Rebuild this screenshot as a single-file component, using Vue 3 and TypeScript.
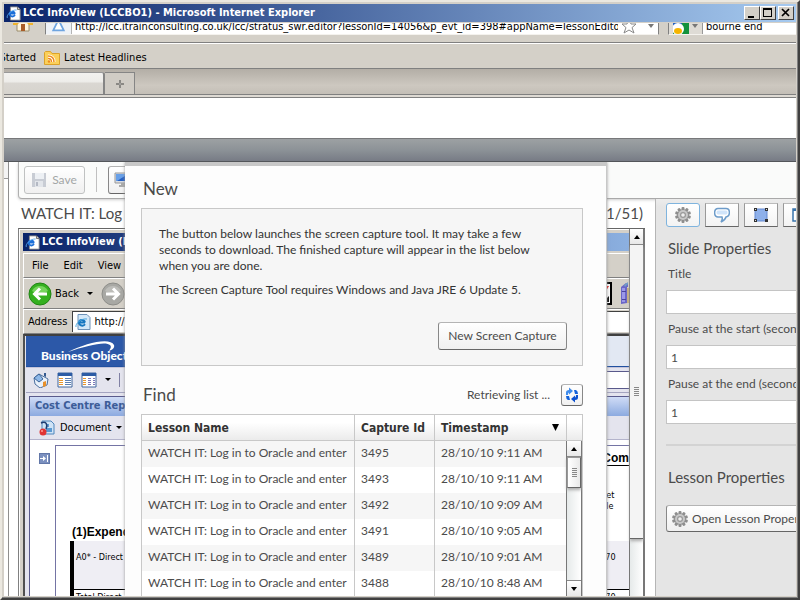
<script setup lang="ts">
import { ref } from 'vue'

interface Capture {
  name: string
  id: number
  time: string
}

const captures: Capture[] = [
  { name: 'WATCH IT: Log in to Oracle and enter', id: 3495, time: '28/10/10 9:11 AM' },
  { name: 'WATCH IT: Log in to Oracle and enter', id: 3493, time: '28/10/10 9:11 AM' },
  { name: 'WATCH IT: Log in to Oracle and enter', id: 3492, time: '28/10/10 9:09 AM' },
  { name: 'WATCH IT: Log in to Oracle and enter', id: 3491, time: '28/10/10 9:05 AM' },
  { name: 'WATCH IT: Log in to Oracle and enter', id: 3489, time: '28/10/10 9:01 AM' },
  { name: 'WATCH IT: Log in to Oracle and enter', id: 3488, time: '28/10/10 8:48 AM' },
]

const url = ref('http://lcc.itrainconsulting.co.uk/lcc/stratus_swr.editor?lessonId=14056&p_evt_id=398#appName=lessonEditor;c')
const search = ref('bourne end')
const slideTitle = ref('')
const pauseStart = ref('1')
const pauseEnd = ref('1')
const gearTeeth = [0, 36, 72, 108, 144, 180, 216, 252, 288, 324]
</script>

<template>
  <div class="window">
    <header class="titlebar">
      <svg class="ie" viewBox="0 0 17 17" aria-hidden="true">
        <path d="M5 1h8l3 3v12H5z" fill="#fff" stroke="#8a8a8a" />
        <path d="M13 1v3h3" fill="#d4d0c8" stroke="#666" />
        <path d="M10.500 8.500H4.200c.3-2.600 5.400-3.200 5.800.3M4.200 8.500c0 3.900 4.300 4.300 6 1.800" fill="none" stroke="#1c6fd8" stroke-width="2" />
        <path d="M1.500 13.500C0 11 6 4 12 4.500" fill="none" stroke="#58a8f0" />
      </svg>
      <h1>LCC InfoView (LCCBO1) - Microsoft Internet Explorer</h1>
      <div class="controls">
        <button type="button" aria-label="Minimize"><svg viewBox="0 0 14 12"><path d="M3 9h6v2H3z" /></svg></button>
        <button type="button" aria-label="Maximize"><svg viewBox="0 0 14 12"><path d="M2 1h9v9H2zM3 3v6h7V3z" fill-rule="evenodd" /></svg></button>
        <button type="button" class="close" aria-label="Close"><svg viewBox="0 0 14 12"><path d="M3 2l7 7M10 2L3 9" stroke="#000" stroke-width="1.700" /></svg></button>
      </div>
    </header>

    <div class="navbar">
      <svg class="home" viewBox="0 0 20 20" aria-hidden="true">
        <path d="M10 2L1 10h3v9h12v-9h3z" fill="#fff5dc" stroke="#9a8c6c" />
        <path d="M10 1L0 10v3h4l6-6 6 6h4v-3z" fill="#f0b32c" />
        <path d="M8 12h4v7H8z" fill="#a85c28" />
      </svg>
      <div class="urlbox">
        <span class="site"><svg viewBox="0 0 16 16"><path d="M8 2l6 12H2z" fill="#fff" stroke="#6fa5e0" stroke-width="2" /></svg></span>
        <input v-model="url" type="text" aria-label="Location">
        <svg class="star" viewBox="0 0 16 16"><path d="M8 1l2 5h5l-4 3.600L13 15l-5-3-5 3 2-5.400L1 6h5z" fill="#fff" stroke="#888" /></svg>
        <svg class="drop" viewBox="0 0 8 6"><path d="M1 1h6L4 5z" fill="#777" /></svg>
      </div>
      <div class="searchbox">
        <span class="engine">
          <svg viewBox="0 0 16 16"><path d="M0 0h16v16H0z" fill="#12923c" /><path d="M0 0h9v8H0z" fill="#2460c0" /><circle cx="5" cy="11" r="6" fill="#fff" /><ellipse cx="5" cy="13" rx="4" ry="3" fill="#f5b400" /></svg>
          <svg class="drop" viewBox="0 0 8 6"><path d="M1 1h6L4 5z" fill="#777" /></svg>
        </span>
        <input v-model="search" type="text" aria-label="Search">
      </div>
    </div>

    <nav class="bookmarks">
      <a href="#started" class="cut"><span>Getting Started</span></a>
      <a href="#news" class="feed">
        <svg viewBox="0 0 16 14" aria-hidden="true">
          <path d="M.5 1.500l1-1h5l1.500 2h7.500v11H.5z" fill="#fbd05a" stroke="#dca22a" />
          <path d="M4 5c4 0 6 2 6 6M4 7.500c2 0 3.500 1 3.500 3.500" fill="none" stroke="#fff" stroke-width="3" />
          <path d="M4 5c4 0 6 2 6 6M4 7.500c2 0 3.500 1 3.500 3.500" fill="none" stroke="#ee8a1d" stroke-width="1.500" />
          <circle cx="5" cy="10.500" r="1.200" fill="#ee8a1d" />
        </svg>
        Latest Headlines
      </a>
    </nav>

    <div class="tabs">
      <div class="tab"></div>
      <button type="button" class="newtab" aria-label="New tab"><svg viewBox="0 0 8 8"><path d="M3 0h2v3h3v2H5v3H3V5H0V3h3z" fill="#8a8884" /><path d="M3.500 3.500h1v1h-1z" fill="#ddd" /></svg></button>
    </div>
    <div class="banner"></div>
    <div class="ribbon"></div>

    <main class="app">
      <div class="sliver"><div></div></div>

      <div class="editor">
        <div class="toolbar">
          <button type="button" class="soft save" disabled>
            <svg viewBox="0 0 14 14" aria-hidden="true"><path d="M0 0h14v14H0z" fill="#c8ccd4" /><path d="M3 0h9v6H3z" fill="#edf0f4" /><path d="M3 8h8v6H3z" fill="#e2e5ea" /><path d="M4 9h2v4H4z" fill="#b4b9c4" /></svg>
            Save
          </button>
          <span class="divider"></span>
          <button type="button" class="soft screen" aria-label="Screen">
            <svg viewBox="0 0 18 16"><path d="M1 1h15v10H1z" fill="#d8dce4" stroke="#999" /><path d="M2 2h13v7H2z" fill="#2560c4" /><path d="M2 2h12L3 9H2z" fill="#68a0e8" /><path d="M7 11h5v2h3v2H5v-2h2z" fill="#aaa" /></svg>
          </button>
        </div>

        <div class="workspace">
          <section class="stage">
            <div class="caption"><span>WATCH IT: Log in to Oracle</span><span>(51/51)</span></div>
            <div class="slide">
              <div class="shot">
                <div class="shot-title">
                  <svg class="ie" viewBox="0 0 17 17" aria-hidden="true">
                    <path d="M5 1h8l3 3v12H5z" fill="#fff" stroke="#8a8a8a" />
                    <path d="M13 1v3h3" fill="#d4d0c8" stroke="#666" />
                    <path d="M10.500 8.500H4.200c.3-2.600 5.400-3.200 5.800.3M4.200 8.500c0 3.900 4.300 4.300 6 1.800" fill="none" stroke="#1c6fd8" stroke-width="2" />
                    <path d="M1.500 13.500C0 11 6 4 12 4.500" fill="none" stroke="#58a8f0" />
                  </svg>
                  LCC InfoView (LCCBO1)
                </div>
                <div class="shot-menu"><span>File</span><span>Edit</span><span>View</span></div>
                <div class="shot-nav">
                  <svg class="round" viewBox="0 0 24 24" aria-hidden="true"><circle cx="12" cy="12" r="11" fill="#35b020" stroke="#208414" /><path d="M4 9a9 9 0 0 1 16 0c-5 3-11 3-16 0z" fill="#75d45c" /><path d="M19 12H7M12 6.500L6.500 12l5.500 5.500" fill="none" stroke="#fff" stroke-width="3" /></svg>
                  <span>Back</span>
                  <svg class="caret" viewBox="0 0 6 4"><path d="M0 0h6L3 3z" /></svg>
                  <svg class="round" viewBox="0 0 24 24" aria-hidden="true"><circle cx="12" cy="12" r="11" fill="#a8a8a4" stroke="#8d8d89" /><path d="M4 9a9 9 0 0 1 16 0c-5 3-11 3-16 0z" fill="#bdbdb9" /><path d="M5 12h12M12 6.500l5.500 5.500-5.500 5.500" fill="none" stroke="#fff" stroke-width="3" /></svg>
                  <span class="grow"></span>
                  <svg class="pic" viewBox="0 0 24 24" aria-hidden="true"><path d="M1 1h21v21H1z" fill="#fff" stroke="#000" stroke-width="2" /><path d="M15 4h5l-3 5z" fill="#e01818" /><path d="M14 16l2-1 2 1 2-2v6h-6z" /></svg>
                  <svg class="books" viewBox="0 0 8 24" aria-hidden="true"><path d="M0 5l5-4 2 1v3H6v16l-6 1z" fill="#6a66c8" /><path d="M1 6h3v14H1z" fill="#9b98e8" /><path d="M1 9h4v1H1zM1 17h4v1H1z" fill="#4a449c" /><path d="M3 3l4-3v2L4 5z" fill="#6f9dc4" /><path d="M6 6h2v15H6z" fill="#c8b080" /></svg>
                </div>
                <div class="shot-address">
                  <span>Address</span>
                  <div class="addr">
                    <svg viewBox="0 0 16 16" aria-hidden="true"><path d="M3 .5h9l3 3v12H3z" fill="#d4e8f8" stroke="#6d92b8" /><path d="M10 8.500H4c.2-3 5-3.500 6 0M4 8.500c.2 3.500 4.500 4 6 1.800" fill="none" stroke="#1677c0" stroke-width="2" /><path d="M1 13C0 10 6 4 12 5" fill="none" stroke="#4aa8e0" /></svg>
                    http://lccbo1
                  </div>
                </div>
                <div class="shot-body">
                  <div class="brand">
                    <svg viewBox="0 0 110 31" aria-hidden="true"><path d="M42 16C60 7 84 1 88 9c1 3-2 5-5 6 1-2 3-4 1-6C80 5 62 9 42 16z" fill="#fff" /></svg>
                    <strong>Business Objects</strong>
                  </div>
                  <div class="brand-tools">
                    <svg class="w16" viewBox="0 0 16 16" aria-hidden="true"><path d="M1 6l5-4 9 5-1 6-7 3-5-4z" fill="#eaf1fa" stroke="#4c6f9e" /><path d="M1 6l5-4 4 5-4 3z" fill="#8fb8e8" stroke="#3d6498" /><path d="M10 10l3-1v5l-3 1z" fill="#e8902c" /><path d="M11 1h2v4l-2-1z" fill="#345a90" /></svg>
                    <svg class="w16" viewBox="0 0 16 16" aria-hidden="true"><path d="M1 1h14v14H1z" fill="#fff" stroke="#40679e" /><path d="M1 1h14v3H1z" fill="#2d5ca5" /><path d="M2 6h4v1H2zm0 2h4v1H2zm0 2h4v1H2zm0 2h4v1H2z" fill="#e8962e" /><path d="M8 6h6v1H8zm0 2h6v1H8zm0 2h6v1H8zm0 2h6v1H8z" fill="#5b7fb4" /></svg>
                    <svg class="w16" viewBox="0 0 16 16" aria-hidden="true"><path d="M1 1h14v14H1z" fill="#fff" stroke="#40679e" /><path d="M1 1h14v3H1z" fill="#2d5ca5" /><path d="M2 6h3v1H2zm0 2h3v1H2zm0 2h3v1H2zm0 2h3v1H2z" fill="#e8962e" /><path d="M7 6h3v1H7zm0 2h3v1H7zm0 2h3v1H7zm0 2h3v1H7zM12 6h2v1h-2zm0 2h2v1h-2zm0 2h2v1h-2zm0 2h2v1h-2z" fill="#7b77b8" /></svg>
                    <svg class="caret" viewBox="0 0 6 4"><path d="M0 0h6L3 3z" /></svg>
                    <span class="bar"></span>
                    <span class="blank"></span>
                  </div>
                  <div class="doc">
                    <div class="doc-title">Cost Centre Report</div>
                    <div class="doc-tools">
                      <svg viewBox="0 0 16 16" aria-hidden="true"><path d="M3 1h9l3 3v10H3z" fill="#cfe3f6" stroke="#4f86bc" /><path d="M7 8h6v4H7zM8 4h2v3H8z" fill="#5c9ad2" /><path d="M2 3c5-2 7 1 5 6" fill="none" stroke="#1d3b70" stroke-width="1.500" /><circle cx="4" cy="12" r="3.500" fill="#e03434" /><circle cx="3" cy="11" r="1" fill="#ff9c94" /></svg>
                      <span>Document</span>
                      <svg class="caret" viewBox="0 0 6 4"><path d="M0 0h6L3 3z" /></svg>
                    </div>
                    <div class="doc-main">
                      <svg class="expand" viewBox="0 0 11 11" aria-hidden="true"><path d="M0 0h11v11H0z" fill="#6277a8" /><path d="M1 1h9v9H1z" fill="#7b90bf" /><path d="M1 5h5v1H1zM4 3l3 2.500L4 8zM8 2h1v7H8z" fill="#fff" /></svg>
                      <div class="page">
                        <table class="report">
                          <thead>
                            <tr><td></td><th class="r"><div class="com">Com</div></th></tr>
                            <tr class="heads"><th>(1)Expenditure</th><td class="r">et<br>le</td></tr>
                          </thead>
                          <tbody>
                            <tr class="row"><td>A0* - Direct</td><td class="r">70</td></tr>
                            <tr class="total"><td>Total Direct</td><td class="r">70</td></tr>
                          </tbody>
                        </table>
                      </div>
                    </div>
                  </div>
                </div>
              </div>
              <div class="scroll tall">
                <button type="button" aria-label="Scroll up"><svg viewBox="0 0 6 4"><path d="M0 4l3-4 3 4z" /></svg></button>
                <div class="thumb"><svg viewBox="0 0 5 9"><path d="M0 0h5v1H0zm0 2h5v1H0zm0 2h5v1H0zm0 2h5v1H0zm0 2h5v1H0z" fill="#888" /></svg></div>
                <div class="track"></div>
              </div>
            </div>
          </section>

          <aside class="props">
            <div class="prop-tabs">
              <button type="button" class="on" aria-label="Settings">
                <svg viewBox="0 0 16 16"><g fill="#8e8e8e"><rect v-for="a in gearTeeth" :key="a" x="6.500" y="0" width="3" height="5" rx="1" :transform="`rotate(${a} 8 8)`" /><circle cx="8" cy="8" r="5.800" /></g><circle cx="8" cy="8" r="5" fill="#c8c8c8" /><circle cx="8" cy="8" r="3" fill="#999" /><circle cx="8" cy="8" r="1.800" fill="#eee" /></svg>
              </button>
              <button type="button" aria-label="Comment">
                <svg viewBox="0 0 16 16"><path d="M4 1.500h8c4.500 0 4.500 8 0 8.500-.5 2-2 3.500-5 5 1.500-2 1.500-3.500 1-5H4C-.5 9.500-.5 2 4 1.500z" fill="#fff" stroke="#6d9cca" stroke-width="1.500" /><path d="M4 3.500h8c2 0 2 4 0 4H4c-2 0-2-4 0-4z" fill="#d0e4fa" /></svg>
              </button>
              <button type="button" aria-label="Shape">
                <svg viewBox="0 0 16 16"><path d="M2 2h12v12H2z" fill="#8eb0ea" stroke="#6288d0" /><path d="M1 1h3v3H1zm11 0h3v3h-3zM1 12h3v3H1zm11 0h3v3h-3z" fill="#333" /><path d="M2 2h1v1H2zm11 0h1v1h-1zM2 13h1v1H2z" fill="#ddd" /></svg>
              </button>
              <button type="button" aria-label="Layout">
                <svg viewBox="0 0 16 16"><path d="M1 2h14v12H1z" fill="#fff" stroke="#3974ac" stroke-width="1.500" /><path d="M1 2h14v2H1z" fill="#3974ac" /></svg>
              </button>
            </div>
            <h2>Slide Properties</h2>
            <label for="p-title">Title</label>
            <input id="p-title" v-model="slideTitle" type="text">
            <label for="p-start">Pause at the start (seconds)</label>
            <input id="p-start" v-model="pauseStart" type="text">
            <label for="p-end">Pause at the end (seconds)</label>
            <input id="p-end" v-model="pauseEnd" type="text">
            <hr>
            <h2>Lesson Properties</h2>
            <button type="button" class="soft lesson">
              <svg viewBox="0 0 16 16" aria-hidden="true"><g fill="#8e8e8e"><rect v-for="a in gearTeeth" :key="a" x="6.500" y="0" width="3" height="5" rx="1" :transform="`rotate(${a} 8 8)`" /><circle cx="8" cy="8" r="5.800" /></g><circle cx="8" cy="8" r="5" fill="#c8c8c8" /><circle cx="8" cy="8" r="3" fill="#999" /><circle cx="8" cy="8" r="1.800" fill="#eee" /></svg>
              Open Lesson Properties
            </button>
          </aside>
        </div>
      </div>

      <section class="dialog" role="dialog" aria-labelledby="dlg">
        <h2 id="dlg">New</h2>
        <div class="notice">
          <p>The button below launches the screen capture tool. It may take a few seconds to download. The finished capture will appear in the list below when you are done.</p>
          <p>The Screen Capture Tool requires Windows and Java JRE 6 Update 5.</p>
          <button type="button" class="soft capture">New Screen Capture</button>
        </div>
        <div class="find">
          <h2>Find</h2>
          <span class="status">Retrieving list ...</span>
          <button type="button" class="soft refresh" aria-label="Refresh">
            <svg viewBox="0 0 14 16"><path d="M1 8V5.500Q1 3 4 3V.5L8 4 4 7.500V5.500Q3 5.500 3 8z" fill="#3f8cec" /><path d="M13 8v2.500q0 2.500-3 2.500v2.500L6 12l4-3.500v2q1 0 1-2.500z" fill="#0a50d0" /><path d="M9 3h2q2 1 2 4h-3zM5 13H3q-2-1-2-4h3z" fill="#1262dc" /></svg>
          </button>
        </div>
        <div class="list">
          <table>
            <colgroup><col><col class="c-id"><col class="c-time"></colgroup>
            <thead>
              <tr><th>Lesson Name</th><th>Capture Id</th><th><span class="sorted">Timestamp <svg viewBox="0 0 7 7"><path d="M0 0h7L3.500 7z" /></svg></span></th></tr>
            </thead>
            <tbody>
              <tr v-for="c in captures" :key="c.id"><td>{{ c.name }}</td><td>{{ c.id }}</td><td>{{ c.time }}</td></tr>
            </tbody>
          </table>
          <div class="list-side">
            <div class="corner"></div>
            <div class="scroll">
              <button type="button" aria-label="Scroll up"><svg viewBox="0 0 6 4"><path d="M0 4l3-4 3 4z" /></svg></button>
              <div class="thumb"><svg viewBox="0 0 5 9"><path d="M0 0h5v1H0zm0 2h5v1H0zm0 2h5v1H0zm0 2h5v1H0zm0 2h5v1H0z" fill="#888" /></svg></div>
              <div class="track"></div>
              <button type="button" aria-label="Scroll down"><svg viewBox="0 0 6 4"><path d="M0 0h6L3 4z" /></svg></button>
            </div>
          </div>
        </div>
      </section>
    </main>
  </div>
</template>

<style>
html, body { margin: 0; overflow: hidden; }
</style>

<style scoped>
* { box-sizing: border-box; }
svg { display: block; flex: none; }
button, input { font: inherit; color: inherit; margin: 0; }
h1, h2, p { margin: 0; }

.window {
  height: 100vh;
  display: flex;
  flex-direction: column;
  padding: 2px;
  border: 2px solid;
  border-color: #ebe8e0 #404040 #404040 #ebe8e0;
  background: #d4d0c8;
  box-shadow: inset -1px -1px #808080;
  font: 11px/14px "DejaVu Sans Condensed", "DejaVu Sans", sans-serif;
  color: #000;
}
.window > * { flex: none; }

.titlebar {
  height: 18px;
  display: flex;
  align-items: center;
  gap: 2px;
  padding: 0 2px;
  background: linear-gradient(90deg, #0a246a, #a6caf0);
  color: #fff;
}
.titlebar h1 { flex: 1; font-size: 11px; font-weight: bold; white-space: nowrap; }
.ie { width: 15px; height: 15px; }
.controls { display: flex; }
.controls button {
  width: 16px; height: 14px; padding: 0;
  border: 1px solid; border-color: #fff #404040 #404040 #fff;
  background: #d4d0c8;
}
.controls .close { margin-left: 2px; }
.controls svg { width: 14px; height: 12px; }

.navbar {
  height: 21px;
  display: flex;
  align-items: flex-end;
  padding-bottom: 7px;
  border-top: 1px solid #d4d0c8;
  border-bottom: 1px solid #808080;
  overflow: hidden;
}
.home { width: 20px; height: 20px; margin: 0 12px 3px 9px; }
.urlbox, .searchbox {
  height: 18px;
  display: flex;
  align-items: center;
  background: #fff;
  border: 1px solid #808080;
  border-bottom-color: #f4f2ee;
}
.urlbox { flex: 1; margin-right: 9px; gap: 3px; }
.searchbox { width: 128px; border-right: 0; gap: 3px; }
.navbar input { border: 0; padding: 0; background: none; outline: none; min-width: 0; height: 16px; flex: 1; }
.site { width: 26px; height: 16px; padding: 0 5px; background: #eef2f7; border-right: 1px solid #b4b4b4; }
.site svg { width: 15px; height: 14px; }
.star { width: 16px; height: 16px; }
.drop { width: 8px; height: 6px; }
.urlbox .drop { margin: 0 3px 0 7px; }
.engine { display: flex; align-items: center; gap: 2px; width: 34px; height: 16px; padding-left: 4px; background: #dedbd5; border-right: 1px solid #999; }
.engine svg:first-child { width: 16px; height: 16px; }

.bookmarks {
  height: 25px;
  display: flex;
  align-items: center;
  gap: 8px;
  padding-top: 3px;
  border-top: 1px solid #fff;
}
.bookmarks a { display: flex; align-items: center; color: #000; text-decoration: none; white-space: nowrap; }
.bookmarks .cut { width: 32px; justify-content: flex-end; overflow: hidden; }
.feed { gap: 4px; }
.feed svg { width: 16px; height: 14px; }

.tabs {
  height: 27px;
  display: flex;
  align-items: stretch;
  padding-top: 3px;
  border-top: 1px solid #808080;
  border-bottom: 1px solid #808080;
  background: linear-gradient(#b3aea6, #cdc8c0 65%, #c4bfb7);
  box-shadow: 0 2px #dedad3;
}
.tab {
  width: 101px;
  border-right: 2px solid #858585;
  border-top: 1px solid #999;
  border-radius: 0 3px 0 0;
  background: linear-gradient(#f2f1ef, #eeedea 40%, #dad7d2 50%, #d6d3cd);
}
.newtab {
  width: 30px; padding: 0;
  display: grid; place-items: center;
  border: 1px solid #858585; border-left: 0; border-bottom: 0;
  background: #d0ccc5;
}
.newtab svg { width: 8px; height: 8px; }

.banner { height: 42px; margin-top: 2px; background: #fff; border-top: 1px solid #808080; border-bottom: 1px solid #77787a; }
.ribbon { height: 23px; background: linear-gradient(#9da1a3, #8c9297 50%, #777b85); border-bottom: 1px solid #53565a; }

.window > .app { flex: 1; min-height: 0; }
.app {
  position: relative;
  display: flex;
  overflow: hidden;
  background: #fff;
  color: #4b4b4b;
  font-family: Lato, "Open Sans", sans-serif;
  font-size: 12px;
  line-height: 16px;
}
.sliver { width: 5px; border-right: 1px solid #8f8f8f; margin-right: 9px; flex: none; }
.sliver div { height: 17px; border-bottom: 1px solid #999; background: #f4f4f4; }
.editor { flex: 1; min-width: 0; display: flex; flex-direction: column; }
.toolbar {
  height: 37px;
  flex: none;
  display: flex;
  align-items: flex-start;
  padding: 4px 5px;
  background: #fafbfa;
  border-left: 1px solid #b0b0b0;
  border-bottom: 1px solid #a9a9a9;
  border-radius: 0 0 0 4px;
  box-shadow: 0 1px 3px #ccc;
}
.soft {
  display: flex;
  align-items: center;
  justify-content: center;
  gap: 6px;
  height: 28px;
  padding: 0 8px;
  border: 1px solid;
  border-color: #b4b4b4 #888 #666 #888;
  border-radius: 3px;
  background: linear-gradient(#fff, #f0f0f0);
  white-space: nowrap;
}
.save { width: 61px; padding: 0; border-color: #c0c2c2; color: #a3a6a6; }
.save svg { width: 14px; height: 14px; }
.divider { width: 1px; height: 25px; margin: 1px 11px; background: #c0c0c0; }
.screen { width: 40px; justify-content: flex-start; padding: 0 5px; }
.screen svg { width: 18px; height: 16px; }

.workspace { flex: 1; min-height: 0; display: flex; }
.stage { flex: 1; min-width: 0; display: flex; flex-direction: column; padding-right: 10px; }
.caption { height: 29px; flex: none; display: flex; align-items: center; justify-content: space-between; padding: 0 2px 2px 3px; font-size: 15px; }
.slide { flex: 1; min-height: 0; display: flex; overflow: hidden; border-left: 1px solid #808080; border-top: 1px solid #666; }
.shot {
  flex: 1; min-width: 0;
  display: flex; flex-direction: column;
  padding: 3px 0 0 3px;
  border-left: 1px solid #fff; border-top: 1px solid #fff;
  background: #d4d0c8;
  font: 11px/14px "DejaVu Sans Condensed", "DejaVu Sans", sans-serif;
  color: #000;
}
.shot > * { flex: none; white-space: nowrap; }
.shot-title { height: 18px; display: flex; align-items: center; gap: 2px; padding-left: 2px; color: #fff; font-weight: bold; background: linear-gradient(90deg, #0a246a, #8cb0e0); }
.shot-menu { height: 25px; margin-top: 2px; display: flex; align-items: center; gap: 15px; padding-left: 8px; border-top: 1px solid #fff; border-left: 1px solid #fff; border-bottom: 1px solid #808080; }
.shot-nav { height: 31px; display: flex; align-items: center; padding: 0 0 0 4px; border-top: 1px solid #fff; border-left: 1px solid #fff; border-bottom: 1px solid #808080; }
.round { width: 24px; height: 24px; }
.shot-nav span { margin-left: 3px; }
.caret { width: 6px; height: 4px; margin: 0 8px; }
.grow { flex: 1; }
.pic { width: 24px; height: 24px; margin-right: 8px; }
.books { width: 8px; height: 24px; }
.shot-address { height: 25px; display: flex; align-items: center; gap: 5px; padding-left: 4px; border-top: 1px solid #fff; border-left: 1px solid #fff; border-bottom: 1px solid #808080; }
.addr { flex: 1; height: 21px; display: flex; align-items: center; gap: 3px; padding-left: 2px; background: #fff; border-top: 1px solid #404040; border-left: 1px solid #404040; }
.addr svg { width: 16px; height: 16px; }
.shot > .shot-body { flex: 1; min-height: 0; }
.shot-body { padding-left: 1px; border-left: 2px solid #505050; border-top: 2px solid #404040; background: #e4e4ee; overflow: hidden; display: flex; flex-direction: column; }
.shot-body > * { flex: none; }
.brand { position: relative; height: 31px; padding: 13px 0 0 15px; background: linear-gradient(90deg, #2c58a8, #2c58a8 30%, #e2e8f3 85%); color: #fff; border-bottom: 1px solid #2050a0; }
.brand strong { font: 900 12px/14px Lato, sans-serif; }
.brand svg { position: absolute; left: 0; top: 0; width: 110px; height: 31px; }
.brand-tools { height: 26px; display: flex; align-items: center; gap: 8px; padding-left: 7px; border-top: 1px solid #c4c4da; border-bottom: 1px solid #a4a4c0; }
.w16 { width: 16px; height: 16px; }
.brand-tools .caret { margin: 0; }
.bar { width: 1px; height: 14px; background: #8080a4; }
.blank { width: 60px; height: 18px; margin-left: auto; background: #fff; border-top: 1px solid #5a5a8c; border-bottom: 1px solid #5a5a8c; }
.shot-body > .doc { flex: 1; min-height: 0; }
.doc { margin: 3px 0 0 3px; border-left: 1px solid #5a5a8c; border-top: 1px solid #5a5a8c; background: #fff; display: flex; flex-direction: column; }
.doc-title { height: 19px; padding: 2px 5px; font-weight: bold; color: #3c5c98; background: linear-gradient(#d0dcf6, #8caae0); }
.doc-tools { height: 24px; display: flex; align-items: center; gap: 5px; padding-left: 9px; background: #e4e4ee; border-bottom: 1px solid #b4b4cc; }
.doc-tools svg:first-child { width: 16px; height: 16px; }
.doc-tools .caret { margin: 0; }
.doc-main { flex: 1; min-height: 0; display: flex; gap: 5px; padding: 5px 0 0 9px; }
.expand { width: 11px; height: 11px; margin-top: 8px; }
.page { flex: 1; min-width: 0; overflow: hidden; border-left: 1px solid #7474a4; border-top: 1px solid #7474a4; padding: 5px 0 0 14px; font: 9px/11px "DejaVu Sans Condensed", "DejaVu Sans", sans-serif; }
.report { width: 100%; border-collapse: collapse; }
.report th, .report td { padding: 0; text-align: left; }
.report th { font-family: "Liberation Sans", Arial, sans-serif; font-size: 12px; line-height: 14px; }
.report .r { width: 26px; }
.com { border-bottom: 1px solid #000; }
.heads { height: 75px; }
.report .heads th { vertical-align: bottom; padding-bottom: 2px; }
.report .heads td.r { vertical-align: top; padding: 24px 0 0 4px; }
.row { height: 48px; background: #efeef4; border-bottom: 1px solid #000; }
.report .row td { vertical-align: top; padding-top: 11px; }
.report td:first-child { padding-left: 2px; }
.row td:first-child, .total td:first-child { border-left: 4px solid #000; }
.report .row td.r, .report .total td.r { padding-left: 3px; }
.report .total td { padding-top: 2px; }

.scroll { display: flex; flex-direction: column; width: 15px; flex: none; border-left: 1px solid #777; border-right: 1px solid #777; background: #fff; }
.scroll button { height: 16px; flex: none; padding: 0; display: grid; place-items: center; border: 0; border-bottom: 1px solid #888; background: linear-gradient(#fff, #e8e8e8); }
.scroll button svg { width: 6px; height: 4px; }
.scroll .track + button { border-top: 1px solid #888; border-bottom: 0; }
.thumb { height: 31px; flex: none; display: grid; place-items: center; border: 1px solid; border-color: #999 #666 #666 #999; background: linear-gradient(90deg, #fff, #e9e9e9); box-shadow: 0 2px 3px #aaa; z-index: 1; }
.thumb svg { width: 5px; height: 9px; }
.track { flex: 1; background: linear-gradient(90deg, #e6eaea, #fff); }
.tall { width: 16px; border-right: 2px solid #777; }
.tall .thumb { height: 294px; border-width: 0 0 1px; background: #f4f4f4; }

.props { width: 141px; flex: none; padding: 4px 0 0 10px; border-left: 1px solid #b5b5b5; background: linear-gradient(#ececec, #e5e5e5 8px); overflow: hidden; }
.prop-tabs { display: flex; gap: 5px; }
.prop-tabs button { width: 34px; height: 24px; flex: none; padding: 0; display: grid; place-items: center; background: linear-gradient(#fff, #f3f3f3); border: 1px solid; border-color: #bbb #999 #666; }
.prop-tabs .on { border-color: #7fb4de; border-radius: 3px; }
.prop-tabs svg { width: 16px; height: 16px; }
.props h2 { font-size: 15px; line-height: 20px; font-weight: normal; margin: 11px 0 8px 2px; white-space: nowrap; }
.props label { display: block; height: 16px; margin: 0 0 8px 2px; white-space: nowrap; }
.props input { display: block; width: 160px; height: 24px; margin-bottom: 7px; padding: 0 4px; border: 1px solid #c4c4c4; background: #fff; outline: none; }
.props hr { width: 160px; height: 2px; margin: 20px 0 21px; border: 0; background: #d3d3d3; }
.props hr + h2 { margin-bottom: 18px; }
.lesson { width: 160px; justify-content: flex-start; gap: 4px; padding: 0 5px; height: 27px; }
.lesson svg { width: 16px; height: 16px; }

.dialog {
  position: absolute;
  left: 121px; top: 0; bottom: 0;
  width: 482px;
  display: flex;
  flex-direction: column;
  padding: 13px 23px 0 16px;
  border-top: 4px solid #c8c8c8;
  border-right: 1px solid #c8c8c8;
  background: #fdfdfd;
  box-shadow: 0 0 3px #999;
}
.dialog > * { flex: none; }
.dialog h2 { font-size: 17px; line-height: 20px; font-weight: normal; padding-left: 2px; }
.notice { height: 158px; display: flex; flex-direction: column; margin-top: 9px; padding: 17px 15px 15px 17px; border: 1px solid #c8c8c8; background: #f6f6f6; color: #333; }
.notice p { max-width: 390px; margin-bottom: 8px; }
.capture { margin-top: auto; align-self: flex-end; width: 129px; color: #4b4b4b; }
.find { display: flex; align-items: center; height: 22px; margin: 18px 0 8px; }
.find h2 { flex: 1; }
.refresh { width: 22px; height: 22px; padding: 0; margin-left: 11px; }
.refresh svg { width: 14px; height: 16px; }
.dialog > .list { flex: 1; min-height: 0; }
.list { display: flex; border: 1px solid #c8c8c8; border-bottom: 0; overflow: hidden; }
.list table { flex: 1; align-self: flex-start; border-collapse: separate; border-spacing: 0; table-layout: fixed; width: 0; }
.c-id { width: 80px; }
.c-time { width: 131px; }
.list th { height: 26px; padding: 0 6px; text-align: left; border-right: 1px solid #c8c8c8; border-bottom: 1px solid #c8c8c8; background: linear-gradient(#fff 30%, #ebebeb); font: bold 12px/16px "DejaVu Sans Condensed", "DejaVu Sans", sans-serif; color: #333; white-space: nowrap; }
.sorted { display: flex; align-items: center; justify-content: space-between; }
.sorted svg { width: 7px; height: 7px; margin-right: 1px; }
.list td { height: 26px; padding: 0 0 2px 6px; white-space: nowrap; overflow: hidden; border-right: 1px solid #c8c8c8; background: #fff; }
.list td:last-child, .list th:last-child { border-right: 0; }
.list tbody tr:nth-child(odd) td { background: #f6f6f6; }
.list-side { width: 16px; flex: none; display: flex; flex-direction: column; }
.corner { height: 26px; flex: none; border-left: 1px solid #c8c8c8; border-bottom: 1px solid #c8c8c8; background: linear-gradient(#fff 30%, #ebebeb); }
.list-side .scroll { flex: 1; width: 16px; min-height: 0; }
</style>
